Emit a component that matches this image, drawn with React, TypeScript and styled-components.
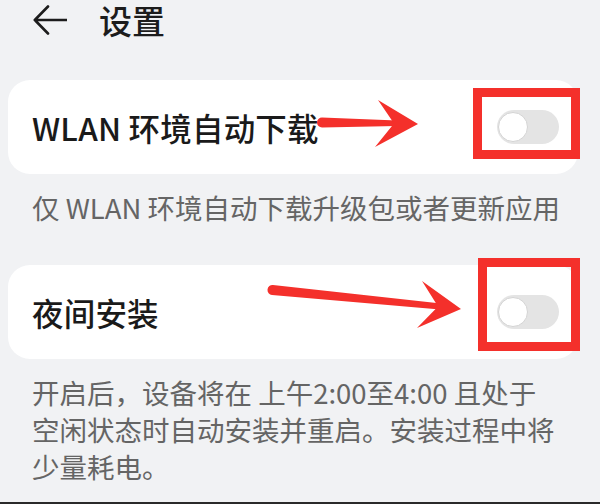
import React, { useState } from "react";
import styled, { createGlobalStyle } from "styled-components";

const GlobalStyle = createGlobalStyle`
  html, body {
    margin: 0;
    padding: 0;
    background: #f1f2f4;
  }
  body {
    font-family: "Noto Sans CJK SC", "Noto Sans", sans-serif;
  }
`;

const Page = styled.div`
  position: relative;
  width: 600px;
  height: 504px;
  overflow: hidden;
  background: #f1f2f4;
  box-shadow: inset 0 -2px 0 #2a2a2a;
`;

const Header = styled.header`
  display: flex;
  align-items: center;
  gap: 32px;
  height: 40px;
  padding-left: 33px;
`;

const BackButton = styled.button`
  display: flex;
  padding: 0;
  border: none;
  background: none;
  color: #1c1c1c;
  cursor: pointer;
`;

const HeaderTitle = styled.h1`
  margin: 0;
  font-size: 33px;
  font-weight: 500;
  line-height: 40px;
  color: #1c1c1c;
`;

const List = styled.div`
  display: flex;
  flex-direction: column;
  padding: 40px 22px 0 8px;
`;

const Card = styled.div`
  display: flex;
  align-items: center;
  justify-content: space-between;
  height: 94px;
  padding: 0 19px 0 24px;
  border-radius: 22px;
  background: #ffffff;
`;

const ItemTitle = styled.span`
  font-size: 31.5px;
  font-weight: 500;
  color: #1a1a1a;
  letter-spacing: 0.2px;
`;

const Description = styled.p<{ $last?: boolean }>`
  margin: 0;
  padding: 15px 0 ${(p) => (p.$last ? "0" : "39px")} 24px;
  font-size: 27.5px;
  line-height: 37px;
  color: #656565;
`;

const Track = styled.button<{ $on: boolean }>`
  position: relative;
  width: 62px;
  height: 34px;
  padding: 0;
  border: none;
  border-radius: 17px;
  background: ${(p) => (p.$on ? "#0a59f7" : "#e4e4e4")};
  cursor: pointer;
`;

const Knob = styled.span<{ $on: boolean }>`
  position: absolute;
  top: 2px;
  left: ${(p) => (p.$on ? "30px" : "1px")};
  width: 30px;
  height: 30px;
  box-sizing: border-box;
  border-radius: 50%;
  border: 1px solid #d4d4d4;
  background: #ffffff;
`;

const Annotations = styled.svg`
  position: absolute;
  left: 0;
  top: 0;
  pointer-events: none;
`;

function Toggle() {
  const [on, setOn] = useState(false);
  return (
    <Track $on={on} onClick={() => setOn(!on)} aria-pressed={on}>
      <Knob $on={on} />
    </Track>
  );
}

const RED = "#f4302b";

export default function App() {
  return (
    <>
      <GlobalStyle />
      <Page>
        <Header>
          <BackButton aria-label="返回">
            <svg width="34" height="30" viewBox="0 0 34 30" fill="none">
              <path
                d="M15 1.5 L1.8 15 L15 28.5 M1.8 15 H33.5"
                stroke="currentColor"
                strokeWidth="2.6"
                strokeLinecap="round"
                strokeLinejoin="round"
              />
            </svg>
          </BackButton>
          <HeaderTitle>设置</HeaderTitle>
        </Header>
        <List>
          <Card>
            <ItemTitle>WLAN 环境自动下载</ItemTitle>
            <Toggle />
          </Card>
          <Description>仅 WLAN 环境自动下载升级包或者更新应用</Description>
          <Card>
            <ItemTitle>夜间安装</ItemTitle>
            <Toggle />
          </Card>
          <Description $last>
            开启后，设备将在 上午2:00至4:00 且处于
            <br />
            空闲状态时自动安装并重启。安装过程中将
            <br />
            少量耗电。
          </Description>
        </List>
        <Annotations width="600" height="504" viewBox="0 0 600 504">
          <rect x="477.5" y="92.5" width="98" height="62" fill="none" stroke={RED} strokeWidth="9" />
          <rect x="482.5" y="262.5" width="93" height="84" fill="none" stroke={RED} strokeWidth="9" />
          <path d="M322 117.5 L397 120.5 L397 126 L322 127.5 A5 5 0 0 1 322 117.5 Z" fill={RED} />
          <path d="M378 100 L418 124 L375 147 L394 123.5 Z" fill={RED} />
          <path d="M273 285 L441 303.5 L440 309.5 L272 295 A5 5 0 0 1 273 285 Z" fill={RED} />
          <path d="M422 281 L461 309 L417 328 L438 306.5 Z" fill={RED} />
        </Annotations>
      </Page>
    </>
  );
}
